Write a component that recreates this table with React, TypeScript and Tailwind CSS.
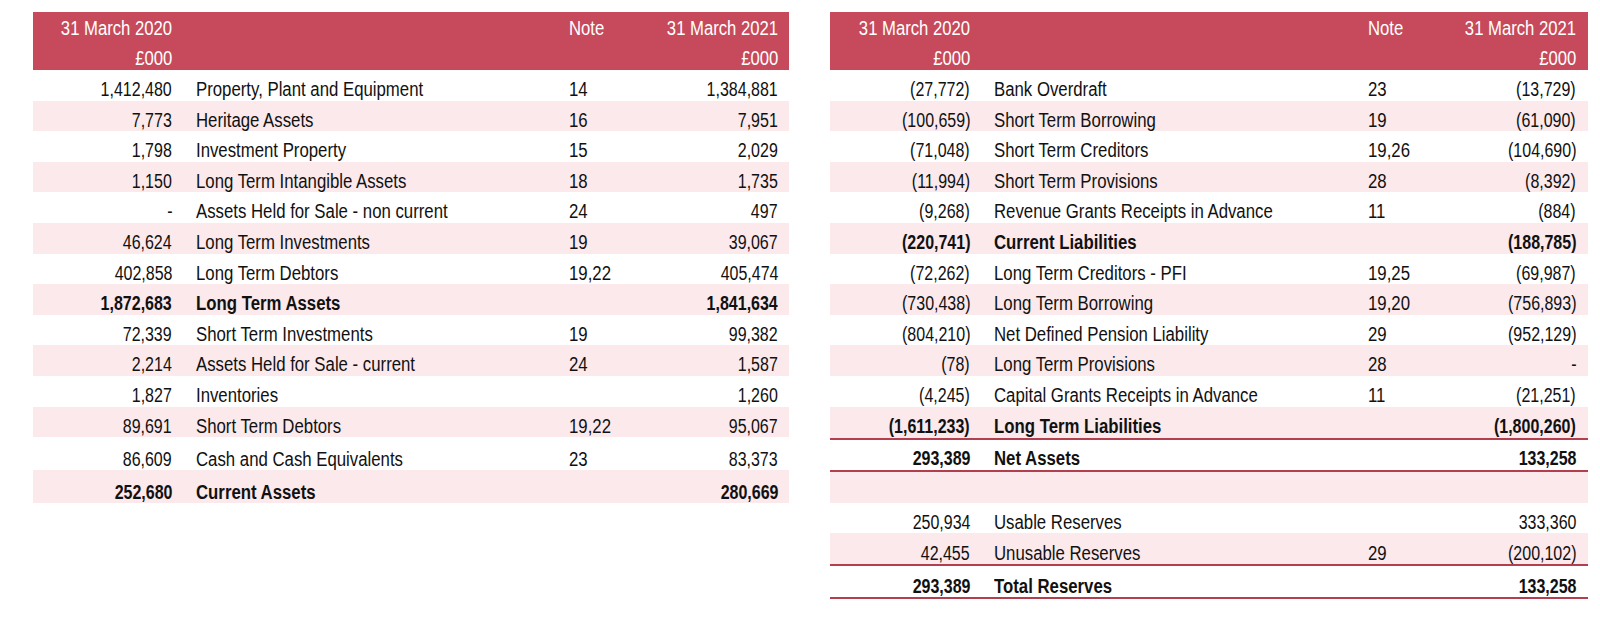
import React from "react";

type Row = {
  a: string;
  d: string;
  n?: string;
  b: string;
  bold?: boolean;
  pink?: boolean;
  h: string;
  border?: boolean;
};

const R = "h-[30.6px]";

const leftRows: Row[] = [
  { a: "1,412,480", d: "Property, Plant and Equipment", n: "14", b: "1,384,881", h: R },
  { a: "7,773", d: "Heritage Assets", n: "16", b: "7,951", pink: true, h: R },
  { a: "1,798", d: "Investment Property", n: "15", b: "2,029", h: R },
  { a: "1,150", d: "Long Term Intangible Assets", n: "18", b: "1,735", pink: true, h: R },
  { a: "-", d: "Assets Held for Sale - non current", n: "24", b: "497", h: R },
  { a: "46,624", d: "Long Term Investments", n: "19", b: "39,067", pink: true, h: R },
  { a: "402,858", d: "Long Term Debtors", n: "19,22", b: "405,474", h: R },
  { a: "1,872,683", d: "Long Term Assets", b: "1,841,634", bold: true, pink: true, h: R },
  { a: "72,339", d: "Short Term Investments", n: "19", b: "99,382", h: R },
  { a: "2,214", d: "Assets Held for Sale - current", n: "24", b: "1,587", pink: true, h: R },
  { a: "1,827", d: "Inventories", b: "1,260", h: R },
  { a: "89,691", d: "Short Term Debtors", n: "19,22", b: "95,067", pink: true, h: R },
  { a: "86,609", d: "Cash and Cash Equivalents", n: "23", b: "83,373", h: "h-[33px]" },
  { a: "252,680", d: "Current Assets", b: "280,669", bold: true, pink: true, h: "h-[33px]" },
];

const rightRows: Row[] = [
  { a: "(27,772)", d: "Bank Overdraft", n: "23", b: "(13,729)", h: R },
  { a: "(100,659)", d: "Short Term Borrowing", n: "19", b: "(61,090)", pink: true, h: R },
  { a: "(71,048)", d: "Short Term Creditors", n: "19,26", b: "(104,690)", h: R },
  { a: "(11,994)", d: "Short Term Provisions", n: "28", b: "(8,392)", pink: true, h: R },
  { a: "(9,268)", d: "Revenue Grants Receipts in Advance", n: "11", b: "(884)", h: R },
  { a: "(220,741)", d: "Current Liabilities", b: "(188,785)", bold: true, pink: true, h: R },
  { a: "(72,262)", d: "Long Term Creditors - PFI", n: "19,25", b: "(69,987)", h: R },
  { a: "(730,438)", d: "Long Term Borrowing", n: "19,20", b: "(756,893)", pink: true, h: R },
  { a: "(804,210)", d: "Net Defined Pension Liability", n: "29", b: "(952,129)", h: R },
  { a: "(78)", d: "Long Term Provisions", n: "28", b: "-", pink: true, h: R },
  { a: "(4,245)", d: "Capital Grants Receipts in Advance", n: "11", b: "(21,251)", h: R },
  { a: "(1,611,233)", d: "Long Term Liabilities", b: "(1,800,260)", bold: true, pink: true, h: "h-[33px]", border: true },
  { a: "293,389", d: "Net Assets", b: "133,258", bold: true, h: "h-[32px]", border: true },
  { a: "", d: "", b: "", pink: true, h: "h-[31px]" },
  { a: "250,934", d: "Usable Reserves", b: "333,360", h: R },
  { a: "42,455", d: "Unusable Reserves", n: "29", b: "(200,102)", pink: true, h: "h-[33px]", border: true },
  { a: "293,389", d: "Total Reserves", b: "133,258", bold: true, h: "h-[33px]", border: true },
];

function TL({ children }: { children: React.ReactNode }) {
  return <span className="inline-block whitespace-nowrap origin-left scale-x-[0.86]">{children}</span>;
}

function TR({ children }: { children: React.ReactNode }) {
  return <span className="inline-block whitespace-nowrap origin-right scale-x-[0.82]">{children}</span>;
}

function TH({ children, left }: { children: React.ReactNode; left?: boolean }) {
  return (
    <span
      className={`inline-block whitespace-nowrap scale-x-[0.855] ${left ? "origin-left" : "origin-right"}`}
    >
      {children}
    </span>
  );
}

function Table({ rows, right }: { rows: Row[]; right?: boolean }) {
  const cols = right
    ? "grid-cols-[140px_24px_374px_1fr] pr-[12px] w-[758px]"
    : "grid-cols-[139px_24px_373px_1fr] pr-[11px] w-[756px]";
  return (
    <div className="flex flex-col text-[19.5px] leading-none text-[#111]">
      <div className={`grid ${cols} bg-[#c64a5b] text-white h-[58px] pt-[1px] leading-[30px]`}>
        <div className="flex flex-col items-end">
          <TH>31 March 2020</TH>
          <TH>£000</TH>
        </div>
        <div />
        <div />
        <div className="flex">
          <div>
            <TH left>Note</TH>
          </div>
          <div className="flex-1 flex flex-col items-end">
            <TH>31 March 2021</TH>
            <TH>£000</TH>
          </div>
        </div>
      </div>
      {rows.map((r, i) => (
        <div
          key={i}
          className={`grid ${cols} items-end pb-[1px] ${r.h} ${r.pink ? "bg-[#fbe9ec]" : "bg-white"} ${
            r.border ? "border-b-2 border-[#b23e50]" : ""
          } ${r.bold ? "font-bold" : ""}`}
        >
          <div className="text-right">
            <TR>{r.a}</TR>
          </div>
          <div />
          <div>
            <TL>{r.d}</TL>
          </div>
          <div className="flex items-end">
            <div>
              <TL>{r.n ?? ""}</TL>
            </div>
            <div className="flex-1 text-right">
              <TR>{r.b}</TR>
            </div>
          </div>
        </div>
      ))}
    </div>
  );
}

export default function App() {
  return (
    <div
      className="w-[1600px] h-[632px] bg-white overflow-hidden"
      style={{ fontFamily: '"Liberation Sans", Arial, sans-serif' }}
    >
      <div className="flex items-start pt-[12px] pl-[33px] gap-[41px]">
        <Table rows={leftRows} />
        <Table rows={rightRows} right />
      </div>
    </div>
  );
}
